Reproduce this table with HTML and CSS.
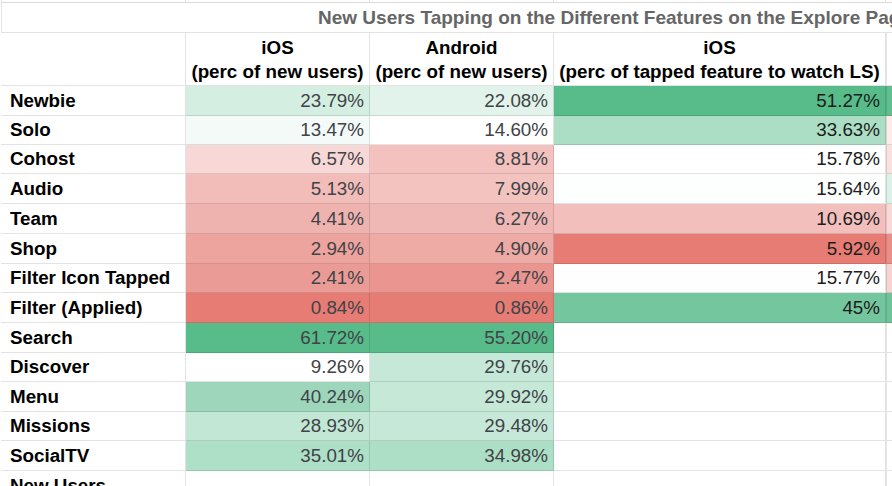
FILE: index.html
```html
<!DOCTYPE html>
<html lang="en">
<head>
<meta charset="utf-8">
<title>New Users Tapping on the Different Features</title>
<link rel="stylesheet" href="styles.css">
</head>
<body>
<div class="sheet">
  <div class="grid">
    <div class="cell top"></div><div class="cell top"></div><div class="cell top"></div><div class="cell top"></div><div class="cell top"></div>

    <div class="cell title">New Users Tapping on the Different Features on the Explore Page</div>

    <div class="cell head"></div>
    <div class="cell head">iOS<br>(perc of new users)</div>
    <div class="cell head">Android<br>(perc of new users)</div>
    <div class="cell head">iOS<br>(perc of tapped feature to watch LS)</div>
    <div class="cell head">Android<br>(perc of tapped feature to watch LS)</div>

    <div class="cell label">Newbie</div>
    <div class="cell num" style="background:#d5eee2">23.79%</div>
    <div class="cell num" style="background:#e1f3ea">22.08%</div>
    <div class="cell num dark" style="background:#57bb8a">51.27%</div>
    <div class="cell num" style="background:#60bf90"></div>

    <div class="cell label">Solo</div>
    <div class="cell num" style="background:#f3faf7">13.47%</div>
    <div class="cell num" style="background:#ffffff">14.60%</div>
    <div class="cell num dark" style="background:#acdec5">33.63%</div>
    <div class="cell num" style="background:#fcecea"></div>

    <div class="cell label">Cohost</div>
    <div class="cell num" style="background:#f8d8d6">6.57%</div>
    <div class="cell num" style="background:#f3c2bf">8.81%</div>
    <div class="cell num dark" style="background:#ffffff">15.78%</div>
    <div class="cell num" style="background:#fae0de"></div>

    <div class="cell label">Audio</div>
    <div class="cell num" style="background:#f2bdb9">5.13%</div>
    <div class="cell num" style="background:#f3c3c0">7.99%</div>
    <div class="cell num dark" style="background:#fdfefe">15.64%</div>
    <div class="cell num" style="background:#dcf1e7"></div>

    <div class="cell label">Team</div>
    <div class="cell num" style="background:#efb3af">4.41%</div>
    <div class="cell num" style="background:#f0b8b4">6.27%</div>
    <div class="cell num dark" style="background:#f3bfbc">10.69%</div>
    <div class="cell num" style="background:#f8d9d7"></div>

    <div class="cell label">Shop</div>
    <div class="cell num" style="background:#eda39e">2.94%</div>
    <div class="cell num" style="background:#eeaaa5">4.90%</div>
    <div class="cell num dark" style="background:#e67c73">5.92%</div>
    <div class="cell num" style="background:#e98f88"></div>

    <div class="cell label">Filter Icon Tapped</div>
    <div class="cell num" style="background:#eb9b95">2.41%</div>
    <div class="cell num" style="background:#ea958f">2.47%</div>
    <div class="cell num dark" style="background:#fefefe">15.77%</div>
    <div class="cell num" style="background:#f7d4d1"></div>

    <div class="cell label">Filter (Applied)</div>
    <div class="cell num" style="background:#e67c73">0.84%</div>
    <div class="cell num" style="background:#e67d74">0.86%</div>
    <div class="cell num dark" style="background:#74c69e">45%</div>
    <div class="cell num" style="background:#6ec399"></div>

    <div class="cell label">Search</div>
    <div class="cell num" style="background:#57bb8a">61.72%</div>
    <div class="cell num" style="background:#57bb8a">55.20%</div>
    <div class="cell num dark"></div>
    <div class="cell num"></div>

    <div class="cell label">Discover</div>
    <div class="cell num" style="background:#ffffff">9.26%</div>
    <div class="cell num" style="background:#c6e8d8">29.76%</div>
    <div class="cell num dark"></div>
    <div class="cell num"></div>

    <div class="cell label">Menu</div>
    <div class="cell num" style="background:#9ed6bb">40.24%</div>
    <div class="cell num" style="background:#c5e8d7">29.92%</div>
    <div class="cell num dark"></div>
    <div class="cell num"></div>

    <div class="cell label">Missions</div>
    <div class="cell num" style="background:#c3e7d5">28.93%</div>
    <div class="cell num" style="background:#c6e8d8">29.48%</div>
    <div class="cell num dark"></div>
    <div class="cell num"></div>

    <div class="cell label">SocialTV</div>
    <div class="cell num" style="background:#aedfc7">35.01%</div>
    <div class="cell num" style="background:#addfc6">34.98%</div>
    <div class="cell num dark"></div>
    <div class="cell num"></div>

    <div class="cell label">New Users</div>
    <div class="cell num"></div>
    <div class="cell num"></div>
    <div class="cell num dark"></div>
    <div class="cell num"></div>
  </div>
</div>
</body>
</html>
```

FILE: styles.css
```css
html, body {
  margin: 0;
  padding: 0;
  background: #ffffff;
}

.sheet {
  width: 892px;
  height: 486px;
  overflow: hidden;
  font-family: "Liberation Sans", Arial, Helvetica, sans-serif;
  font-size: 18.8px;
}

.grid {
  display: grid;
  margin-left: 1px;
  grid-template-columns: 185px 184px 184px 332px 332px;
  grid-template-rows: 3px 30px 53px 30px 29px 29px 30px 30px 30px 29px 30px 30px 29px 30px 29px 30px 30px;
}

.cell {
  box-sizing: border-box;
  border-right: 1px solid rgba(0, 0, 0, 0.11);
  border-bottom: 1px solid rgba(0, 0, 0, 0.11);
  white-space: nowrap;
  overflow: hidden;
  display: flex;
  align-items: center;
  min-width: 0;
}

.grid > .cell:nth-child(5n + 1) {
  border-left: 1px solid rgba(0, 0, 0, 0.11);
}

.top {
  border-bottom-color: #dadada;
}

.title {
  grid-column: 1 / span 5;
  border-left: 1px solid rgba(0, 0, 0, 0.11);
  border-right: none;
  padding-left: 316px;
  font-size: 19px;
  font-weight: bold;
  color: #666666;
  overflow: visible;
}

.head {
  justify-content: center;
  text-align: center;
  font-weight: bold;
  color: #000000;
  line-height: 24px;
  padding-top: 2px;
  overflow: visible;
}

.grid > .head:nth-child(11) {
  border-left: 1px solid rgba(0, 0, 0, 0.11);
}

.label {
  padding-left: 9px;
  font-weight: bold;
  color: #000000;
}

.num {
  justify-content: flex-end;
  padding-right: 5px;
  color: #404347;
}

.num.dark {
  color: #1c1c1c;
}
```
